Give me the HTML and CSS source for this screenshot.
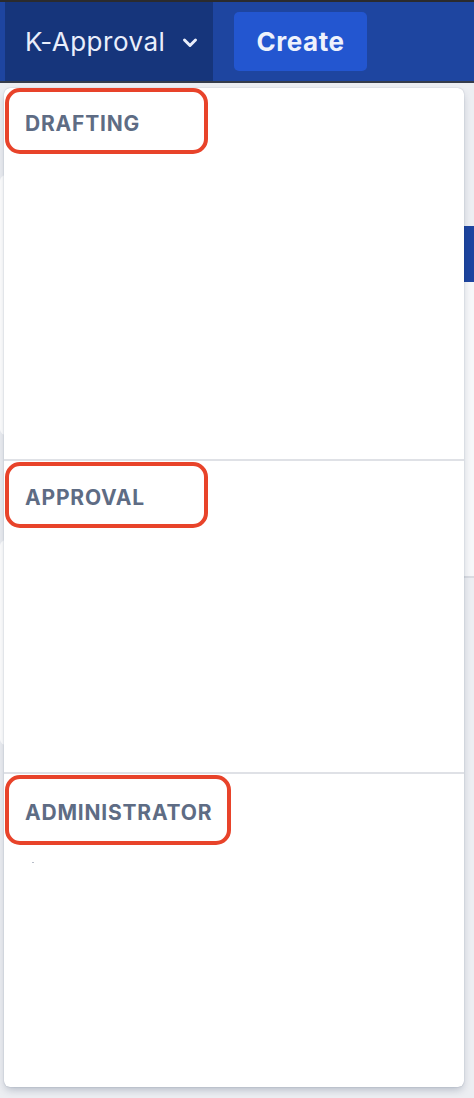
FILE: index.html
```html
<!DOCTYPE html>
<html lang="en">
<head>
    <meta charset="UTF-8">
    <meta name="viewport" content="width=device-width, initial-scale=1.0">
    <title>K-Approval</title>
<link rel="stylesheet" href="styles.css">
</head>
<body>
<div class="chrome"></div>
<header class="topbar">
  <div class="project">
    <span>K-Approval</span>
    <svg class="chevron" width="16" height="16" viewBox="0 0 16 16">
      <path d="M2.5 5 L8 10.5 L13.5 5" fill="none" stroke="currentColor" stroke-width="3" stroke-linecap="round" stroke-linejoin="round"/>
    </svg>
  </div>
  <button class="create">Create</button>
</header>

<main class="page">
  <!-- page content peeking out from under the menu -->
  <div class="backdrop">
    <div class="backdrop-left">
      <div class="ghost-card first"></div>
      <div class="ghost-card second"></div>
    </div>
    <div class="backdrop-right">
      <div class="ghost-tab"></div>
      <div class="ghost-panel"></div>
    </div>
  </div>

  <nav class="menu">
    <section class="menu-group drafting">
      <div class="group-title"><span>DRAFTING</span></div>
    </section>
    <section class="menu-group approval">
      <div class="group-title"><span>APPROVAL</span></div>
    </section>
    <section class="menu-group admin">
      <div class="group-title wide"><span>ADMINISTRATOR</span></div>
      <i class="speck"></i>
    </section>
  </nav>
</main>
</body>
</html>
```

FILE: styles.css
```css
* {
  box-sizing: border-box;
}

body {
  margin: 0;
  background-color: #eceef2;
  font-family: Inter, 'Noto Sans', sans-serif;
  height: 1098px;
  overflow: hidden;
}

.chrome {
  height: 2px;
  background-color: #2b2b2d;
}

.topbar {
  display: flex;
  align-items: flex-start;
  height: 81px;
  padding-left: 5px;
  background-color: #1e45a0;
  border-bottom: 2px solid #353c4b;
}

.project {
  display: flex;
  align-items: center;
  gap: 17px;
  width: 208px;
  height: 100%;
  padding-left: 20px;
  background-color: #16357b;
  color: #e9eefb;
  font-size: 26px;
  letter-spacing: 0.5px;
}

.chevron {
  margin-top: 3px;
}

.create {
  margin: 10px 0 0 21px;
  width: 133px;
  height: 59px;
  border: none;
  border-radius: 5px;
  background-color: #2356d0;
  color: #eef2fc;
  font-family: Inter, 'Noto Sans', sans-serif;
  font-size: 26px;
  font-weight: 700;
  letter-spacing: 0.5px;
}

.page {
  position: relative;
  height: 1015px;
}

.backdrop {
  display: flex;
  justify-content: space-between;
  height: 100%;
}

.backdrop-left {
  width: 20px;
}

.ghost-card {
  background-color: #fff;
  border-radius: 6px 0 0 6px;
}

.ghost-card.first {
  margin-top: 92px;
  height: 260px;
}

.ghost-card.second {
  margin-top: 105px;
  height: 205px;
}

.backdrop-right {
  width: 20px;
}

.ghost-tab {
  margin-top: 143px;
  height: 56px;
  background-color: #1e45a0;
}

.ghost-panel {
  height: 296px;
  background-color: #f6f7f9;
  border-bottom: 2px solid #d9dce2;
}

/* dropdown menu */
.menu {
  position: absolute;
  top: 5px;
  left: 4px;
  width: 460px;
  height: 999px;
  background-color: #fff;
  border-radius: 6px;
  box-shadow: 0 4px 8px -2px rgba(9, 30, 66, 0.28), 0 0 1px rgba(9, 30, 66, 0.35);
  display: flex;
  flex-direction: column;
}

.menu-group {
  position: relative;
}

.menu-group.drafting {
  height: 373px;
  border-bottom: 2px solid #dfe1e6;
}

.menu-group.approval {
  height: 313px;
  padding-top: 1px;
  border-bottom: 2px solid #dfe1e6;
}

.menu-group.admin {
  flex: 1;
  padding-top: 1px;
}

.group-title {
  display: flex;
  align-items: center;
  width: 203px;
  height: 66px;
  margin-left: 1px;
  padding: 4px 0 0 16px;
  border: 4px solid #e8432a;
  border-radius: 15px;
  color: #5e6c84;
  font-size: 21px;
  font-weight: 700;
  letter-spacing: 0.8px;
}

.group-title.wide {
  width: 226px;
  height: 70px;
}

.speck {
  position: absolute;
  top: 88px;
  left: 28px;
  width: 2px;
  height: 1px;
  background-color: #b8bec9;
}
```
